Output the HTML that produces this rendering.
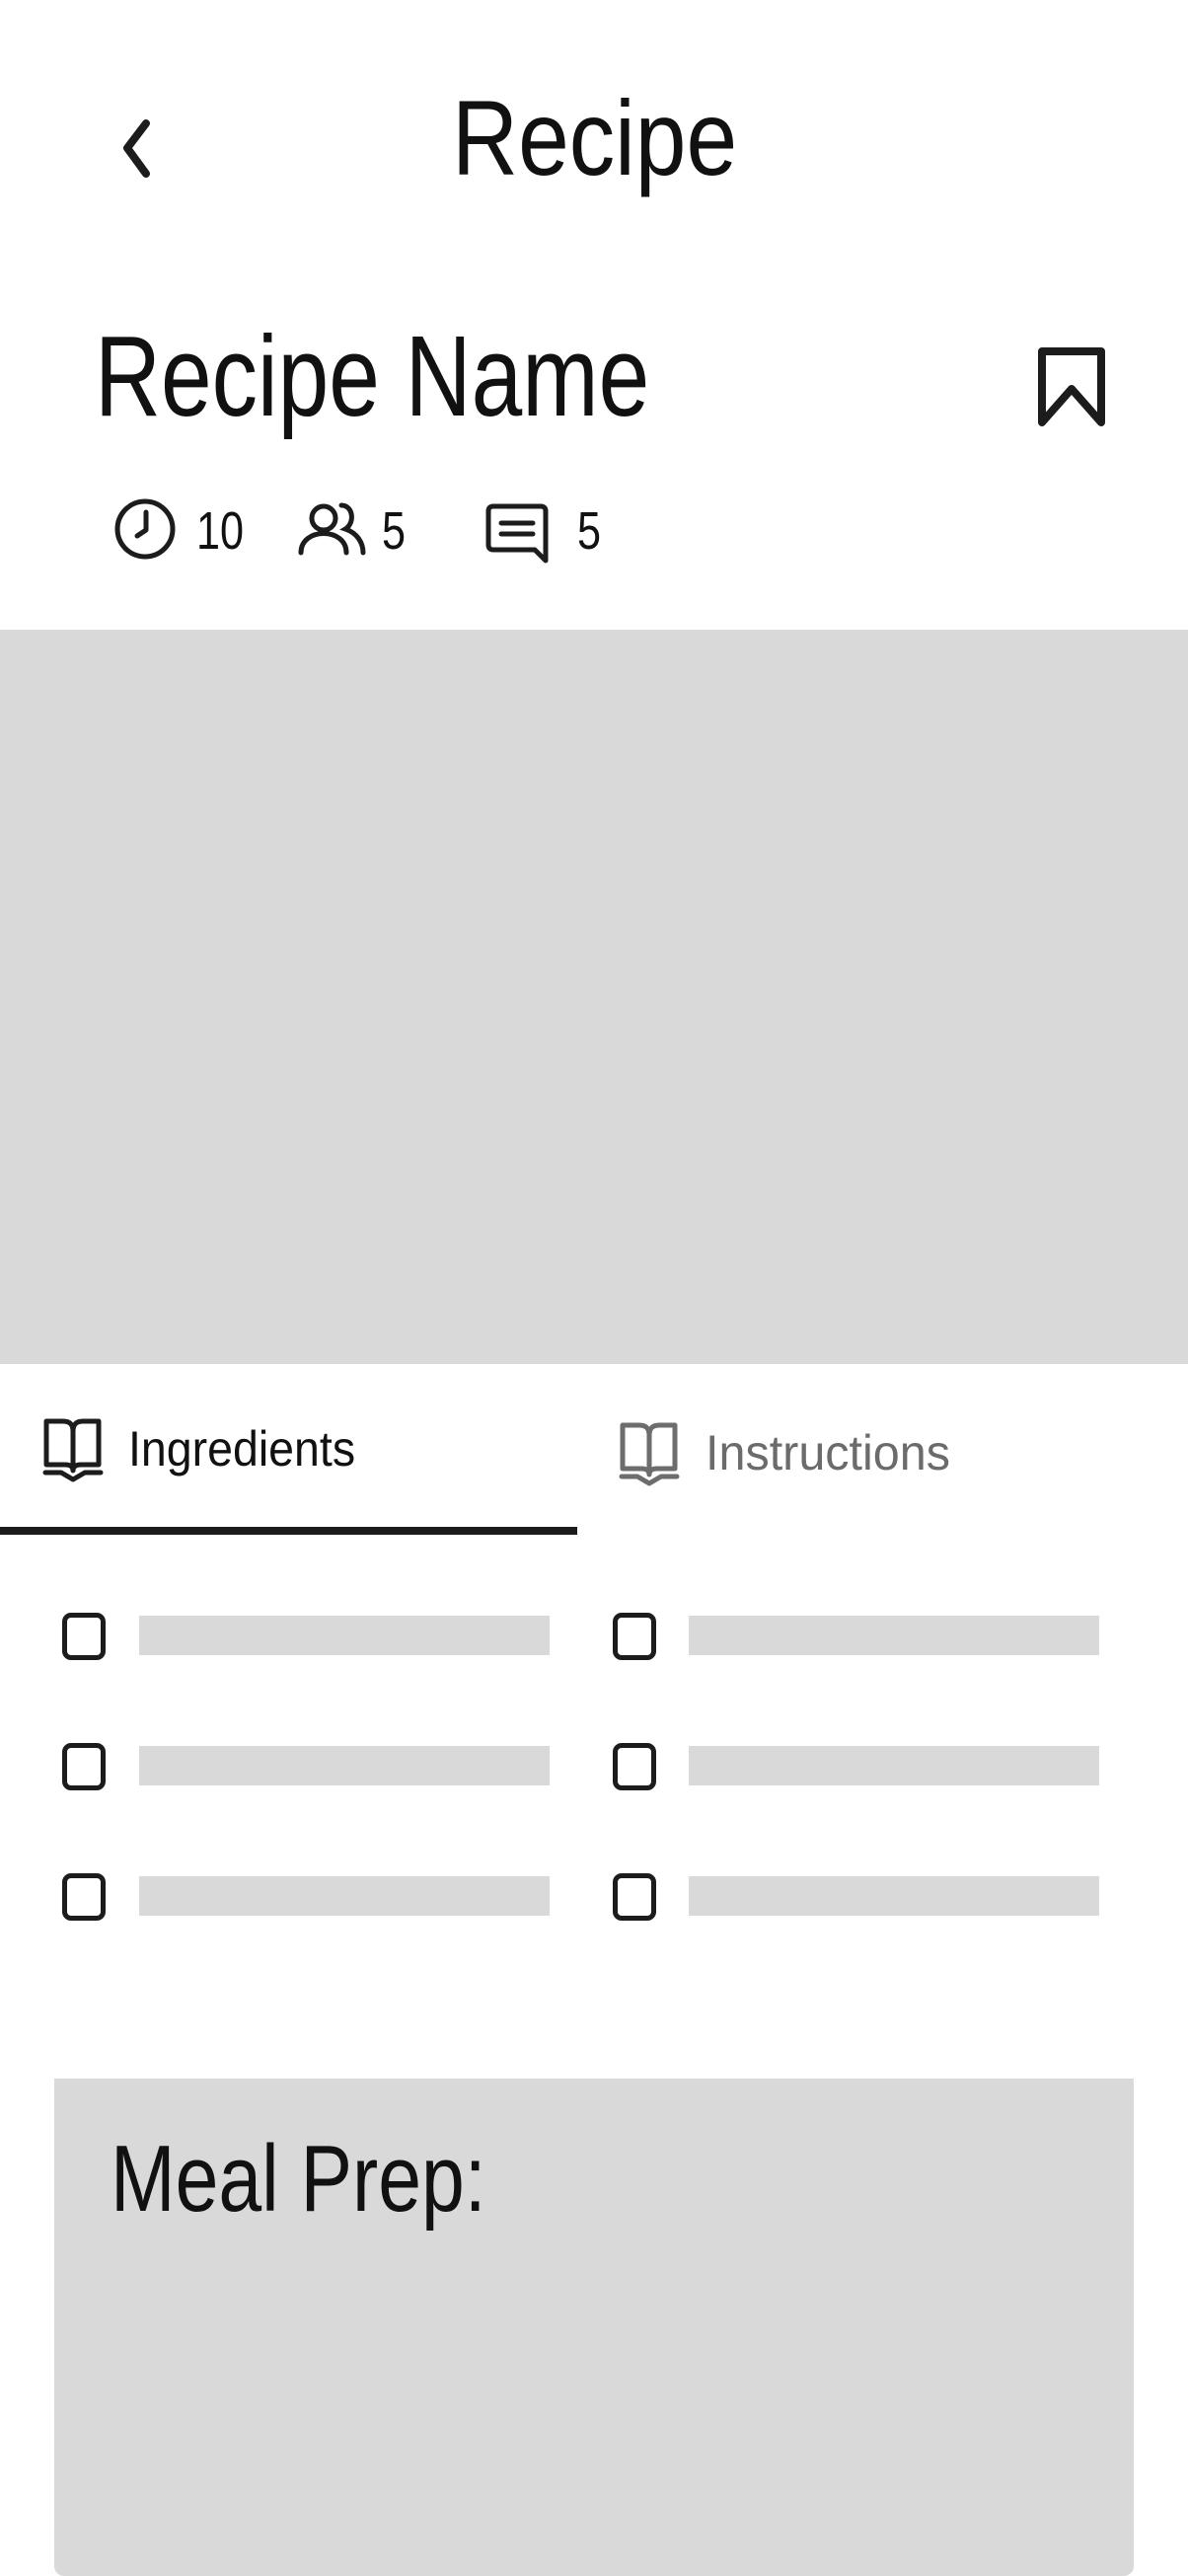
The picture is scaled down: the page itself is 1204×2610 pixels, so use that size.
<!DOCTYPE html>
<html><head><meta charset="utf-8"><style>
*{margin:0;padding:0;box-sizing:border-box}
body{width:1204px;height:2610px;background:#fff;position:relative;overflow:hidden;font-family:"Liberation Sans",sans-serif;color:#111}
.a{position:absolute;white-space:nowrap;transform-origin:0 0}
.bar{position:absolute;background:#d9d9d9;height:40px;width:416px}
.cb{position:absolute;width:44px;height:48px;border:5px solid #1c1c1c;border-radius:9px}
</style></head><body>
<svg class="a" style="left:110px;top:115px" width="60" height="70" viewBox="0 0 60 70"><path d="M38 10 L19 35 L38 61" fill="none" stroke="#1c1c1c" stroke-width="8" stroke-linecap="round" stroke-linejoin="round"/></svg>
<div class="a" style="left:458px;top:70px;font-size:108px;line-height:140px;transform:scaleX(0.86)">Recipe</div>
<div class="a" style="left:96px;top:306px;font-size:116px;line-height:150px;transform:scaleX(0.8)">Recipe Name</div>
<svg class="a" style="left:1048px;top:350px" width="76" height="84" viewBox="0 0 76 84"><path d="M8 6 H68 V78 L38 44 L8 78 Z" fill="none" stroke="#1c1c1c" stroke-width="8" stroke-linejoin="round"/></svg>
<svg class="a" style="left:115px;top:503px" width="64" height="66" viewBox="0 0 64 66"><circle cx="32" cy="33" r="28" fill="none" stroke="#1c1c1c" stroke-width="5"/><path d="M33 16 V34 L24 40" fill="none" stroke="#1c1c1c" stroke-width="5" stroke-linecap="round" stroke-linejoin="round"/></svg>
<div class="a" style="left:199px;top:508px;font-size:54px;line-height:60px;transform:scaleX(0.8)">10</div>
<svg class="a" style="left:300px;top:508px" width="74" height="56" viewBox="0 0 74 56"><circle cx="28" cy="17" r="12" fill="none" stroke="#1c1c1c" stroke-width="5"/><path d="M5 52 C5 26 51 26 51 52" fill="none" stroke="#1c1c1c" stroke-width="5" stroke-linecap="round"/><path d="M46 4 C58 4 60 22 50 28 C62 32 68 42 68 52" fill="none" stroke="#1c1c1c" stroke-width="5" stroke-linecap="round"/></svg>
<div class="a" style="left:387px;top:508px;font-size:54px;line-height:60px;transform:scaleX(0.8)">5</div>
<svg class="a" style="left:490px;top:508px" width="68" height="66" viewBox="0 0 68 66"><path d="M10 5 H58 Q63 5 63 10 V60 L52 49 H10 Q5 49 5 44 V10 Q5 5 10 5 Z" fill="none" stroke="#1c1c1c" stroke-width="5" stroke-linejoin="round"/><path d="M18 22 H50 M18 33 H50" stroke="#1c1c1c" stroke-width="5" stroke-linecap="round"/></svg>
<div class="a" style="left:585px;top:508px;font-size:54px;line-height:60px;transform:scaleX(0.8)">5</div>
<div class="a" style="left:0;top:638px;width:1204px;height:744px;background:#d9d9d9"></div>
<svg class="a" style="left:42px;top:1436px" width="64" height="66" viewBox="0 0 64 66"><path d="M5 4 H22 Q32 4 32 14 Q32 4 42 4 H58 V48 H40 Q32 48 32 54 Q32 48 24 48 H5 Z M32 14 V52" fill="none" stroke="#1c1c1c" stroke-width="5" stroke-linejoin="round"/><path d="M4 56 H20 L32 63 L44 56 H60" fill="none" stroke="#1c1c1c" stroke-width="5" stroke-linecap="round" stroke-linejoin="round"/></svg>
<div class="a" style="left:130px;top:1438px;font-size:50px;line-height:60px;transform:scaleX(0.93)">Ingredients</div>
<svg class="a" style="left:626px;top:1440px" width="64" height="66" viewBox="0 0 64 66"><path d="M5 4 H22 Q32 4 32 14 Q32 4 42 4 H58 V48 H40 Q32 48 32 54 Q32 48 24 48 H5 Z M32 14 V52" fill="none" stroke="#6d6d6d" stroke-width="5" stroke-linejoin="round"/><path d="M4 56 H20 L32 63 L44 56 H60" fill="none" stroke="#6d6d6d" stroke-width="5" stroke-linecap="round" stroke-linejoin="round"/></svg>
<div class="a" style="left:715px;top:1442px;font-size:50px;line-height:60px;color:#6b6b6b;transform:scaleX(0.97)">Instructions</div>
<div class="a" style="left:0;top:1547px;width:585px;height:8px;background:#1c1c1c"></div>
<div class="cb" style="left:63px;top:1634px"></div><div class="bar" style="left:141px;top:1637px"></div>
<div class="cb" style="left:621px;top:1634px"></div><div class="bar" style="left:698px;top:1637px"></div>
<div class="cb" style="left:63px;top:1766px"></div><div class="bar" style="left:141px;top:1769px"></div>
<div class="cb" style="left:621px;top:1766px"></div><div class="bar" style="left:698px;top:1769px"></div>
<div class="cb" style="left:63px;top:1898px"></div><div class="bar" style="left:141px;top:1901px"></div>
<div class="cb" style="left:621px;top:1898px"></div><div class="bar" style="left:698px;top:1901px"></div>
<div class="a" style="left:55px;top:2106px;width:1094px;height:504px;background:#d9d9d9;border-radius:0 0 10px 10px"></div>
<div class="a" style="left:112px;top:2148px;font-size:96px;line-height:120px;transform:scaleX(0.82)">Meal Prep:</div>
</body></html>
